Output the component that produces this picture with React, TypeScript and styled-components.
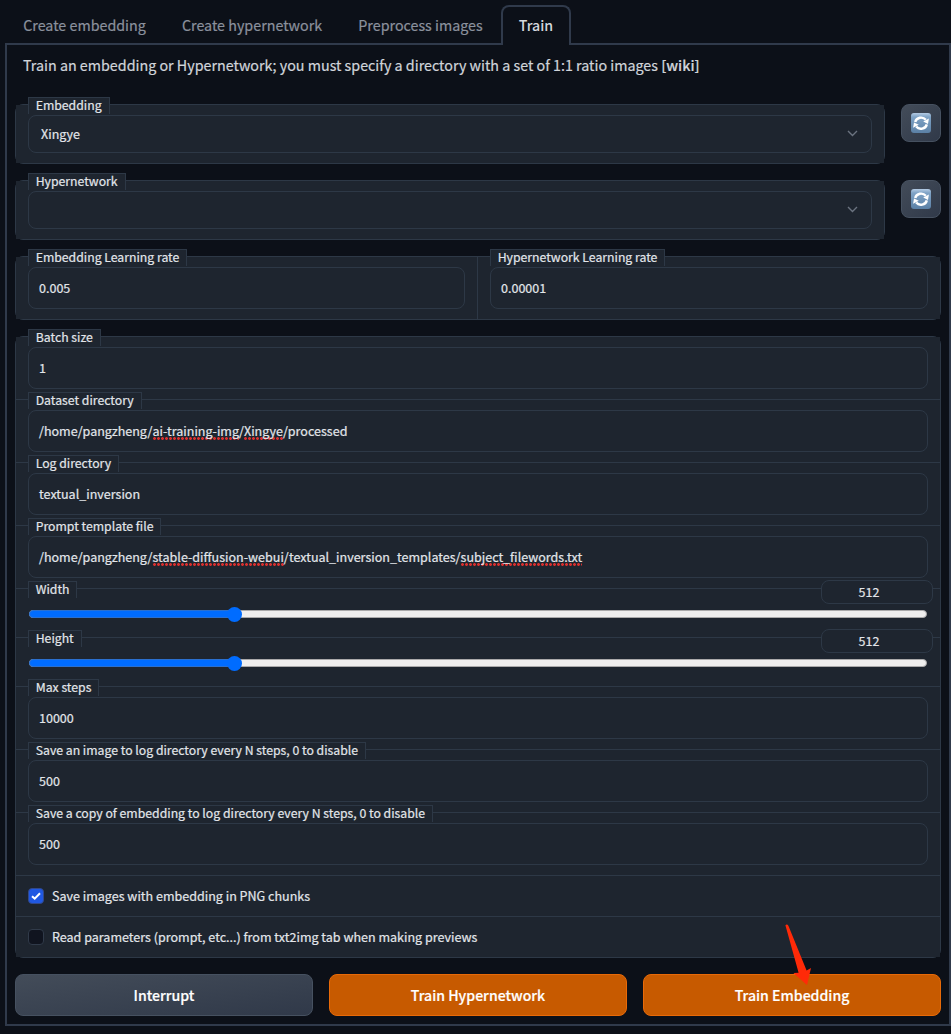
import React from 'react';
import styled, { createGlobalStyle, css } from 'styled-components';

const line = '#2d3846';
const fill = '#1e252f';
const page = '#0c1018';

const Global = createGlobalStyle`
  * { box-sizing: border-box; }
  body {
    margin: 0;
    background: ${page};
    color: #e2e5ea;
    font-family: "Noto Sans CJK SC", "Liberation Sans", sans-serif;
    font-size: 12.54px;
    line-height: 20px;
    -webkit-text-stroke: 0.2px currentColor;
  }
`;

const Page = styled.main`
  width: 951px;
  height: 1034px;
  padding: 5px 0 0 5px;
  overflow: hidden;
`;

const TabBar = styled.nav`
  display: flex;
  height: 40px;
  border-bottom: 2px solid #303a4b;
`;

const Tab = styled.button<{ $active?: boolean; $width: number }>`
  width: ${p => p.$width}px;
  height: 40px;
  padding: 0 0 3px;
  border: 2px solid transparent;
  border-bottom: 0;
  border-radius: 8px 8px 0 0;
  background: transparent;
  color: #8b919d;
  font: inherit;
  font-size: 14.3px;
  white-space: nowrap;
  ${p => p.$active && css`
    border-color: #303a4b;
    background: ${page};
    color: #d5d8de;
    font-size: 14.2px;
    font-weight: 500;
    -webkit-text-stroke: 0;
  `}
`;

const Panel = styled.section`
  display: flex;
  flex-direction: column;
  gap: 16px;
  height: 981px;
  padding: 8px 8px 8px;
  border: 2px solid #303a4b;
  border-top: 0;
`;

const Intro = styled.p`
  margin: 0;
  padding-left: 8px;
  height: 35px;
  line-height: 24px;
  font-size: 14.3px;
  color: #d1d5db;
`;

const Wiki = styled.a`
  font-weight: 500;
`;

const Row = styled.div`
  display: flex;
  gap: 16px;
`;

const Block = styled.div`
  flex: 1;
  border: 1px solid ${line};
  border-radius: 8px;
`;

const Split = styled(Block)`
  display: grid;
  grid-template-columns: 461px 1fr;
`;

const Cell = styled.div<{ $height?: number }>`
  position: relative;
  padding: 10px 12px;
  height: ${p => (p.$height ? `${p.$height}px` : 'auto')};
  background: ${fill};
  ${Split} > & + & { border-left: 1px solid ${line}; }
`;

const Stack = styled(Block)`
  flex: none;
  > * + * { border-top: 1px solid ${line}; }
`;

const Label = styled.span`
  position: absolute;
  top: -8px;
  left: 12px;
  height: 17px;
  padding: 0 7px 0 6.7px;
  border: 1px solid ${line};
  border-bottom: 0;
  background: ${fill};
  font-size: 12.26px;
  line-height: 14px;
  white-space: nowrap;
`;

const Box = styled.div<{ $select?: boolean }>`
  display: flex;
  align-items: center;
  justify-content: space-between;
  height: ${p => (p.$select ? 38 : 42)}px;
  padding: ${p => (p.$select ? '0 12px' : '0 10px')};
  border: 1px solid ${line};
  border-radius: 8px;
`;

const Misspelt = styled.span`
  display: inline-block;
  height: 19px;
  vertical-align: top;
  background: radial-gradient(circle at 1.5px 1.5px, #d9302f 1.2px, transparent 1.6px) 0 100% / 4px 3px repeat-x;
`;

const Refresh = styled.button`
  display: grid;
  place-items: center;
  width: 40px;
  height: 38px;
  padding: 0;
  border: 1px solid #465160;
  border-radius: 8px;
  background: linear-gradient(to bottom right, #434c59, #303949);
`;

const NumberBox = styled.div`
  position: absolute;
  top: -9px;
  right: 7px;
  width: 112px;
  height: 24px;
  padding-right: 16px;
  border: 1px solid ${line};
  border-radius: 8px;
  background: ${fill};
  text-align: center;
  line-height: 22px;
`;

const Track = styled.div`
  position: relative;
  height: 8px;
  margin: 11px 1px 0;
  border: 1px solid #aaa9aa;
  border-radius: 4px;
  background: #efeeee;
`;

const Filled = styled.div`
  position: absolute;
  top: -1px;
  left: -1px;
  height: 8px;
  border: 1px solid #2b70cf;
  border-radius: 4px;
  background: #006cff;
`;

const Thumb = styled.div`
  position: absolute;
  top: -4.5px;
  width: 15px;
  height: 15px;
  margin-left: -8.5px;
  border-radius: 50%;
  background: #006cff;
`;

const CheckRow = styled.label<{ $height: number }>`
  display: flex;
  align-items: center;
  gap: 8px;
  height: ${p => p.$height}px;
  padding: 0 12px;
  background: ${fill};
`;

const Check = styled.span<{ $on?: boolean }>`
  display: grid;
  place-items: center;
  width: 16px;
  height: 16px;
  border: 1px solid ${p => (p.$on ? '#31488a' : '#303a49')};
  border-radius: 4px;
  background: ${p => (p.$on ? '#2058e2' : '#10141f')};
`;

const Action = styled.button<{ $primary?: boolean }>`
  position: relative;
  flex: 1;
  height: 42px;
  padding: 0;
  border: 1px solid ${p => (p.$primary ? '#e86a08' : '#465160')};
  border-radius: 8px;
  background: ${p => (p.$primary ? '#c75a00' : 'linear-gradient(to bottom right, #434c59, #303949)')};
  color: #fff;
  font: inherit;
  font-size: 14.1px;
  font-weight: 500;
`;

const Arrow = styled.svg`
  position: absolute;
  left: 138px;
  top: -52px;
`;

const RefreshIcon = () => (
  <svg width="20" height="20" viewBox="0 0 20 20">
    <defs>
      <linearGradient id="tile" x1="0" y1="0" x2="0" y2="1">
        <stop offset="0" stopColor="#b4cbe4" />
        <stop offset="0.2" stopColor="#7fa3c6" />
        <stop offset="1" stopColor="#5b80a5" />
      </linearGradient>
    </defs>
    <rect width="20" height="20" rx="3" fill="url(#tile)" />
    <path d="M4.2 9A6 5.6 0 0 1 14.8 6.8M15.8 11.4A6 5.6 0 0 1 5.2 13.6" fill="none" stroke="#fff" strokeWidth="2.4" />
    <path d="M17.9 5.6 17 11 12.2 8.6zM2.1 14.8 3 9.4 7.8 11.8z" fill="#fff" />
  </svg>
);

const Chevron = () => (
  <svg width="12" height="8" viewBox="0 0 12 8" fill="none" stroke="#6b7380" strokeWidth="1.4">
    <path d="M1 1 5.5 5.5 10 1" />
  </svg>
);

const Field = ({ label, children }: { label: string; children: React.ReactNode }) => (
  <Cell>
    <Label>{label}</Label>
    <Box><span>{children}</span></Box>
  </Cell>
);

const Select = ({ label, value }: { label: string; value?: string }) => (
  <Row>
    <Block>
      <Cell>
        <Label>{label}</Label>
        <Box $select><span>{value}</span><Chevron /></Box>
      </Cell>
    </Block>
    <Refresh><RefreshIcon /></Refresh>
  </Row>
);

const Slider = ({ label, value, max }: { label: string; value: number; max: number }) => {
  const at = `${((value - 64) / (max - 64)) * 100 + 0.4}%`;
  return (
    <Cell $height={49}>
      <Label>{label}</Label>
      <NumberBox>{value}</NumberBox>
      <Track>
        <Filled style={{ width: at }} />
        <Thumb style={{ left: at }} />
      </Track>
    </Cell>
  );
};

export default function App() {
  return (
    <Page>
      <Global />
      <TabBar>
        <Tab $width={159}>Create embedding</Tab>
        <Tab $width={176}>Create hypernetwork</Tab>
        <Tab $width={161}>Preprocess images</Tab>
        <Tab $width={70} $active>Train</Tab>
      </TabBar>
      <Panel>
        <Intro>
          Train an embedding or Hypernetwork; you must specify a directory with a set of 1:1 ratio images <Wiki>[wiki]</Wiki>
        </Intro>
        <Select label="Embedding" value="Xingye" />
        <Select label="Hypernetwork" />
        <Row>
          <Split>
            <Field label="Embedding Learning rate">0.005</Field>
            <Field label="Hypernetwork Learning rate">0.00001</Field>
          </Split>
        </Row>
        <Stack>
          <Field label="Batch size">1</Field>
          <Field label="Dataset directory">
            /home/pangzheng/<Misspelt>ai-training-img</Misspelt>/<Misspelt>Xingye</Misspelt>/processed
          </Field>
          <Field label="Log directory">textual_inversion</Field>
          <Field label="Prompt template file">
            /home/pangzheng/<Misspelt>stable-diffusion-webui</Misspelt>/textual_inversion_templates/<Misspelt>subject_filewords.txt</Misspelt>
          </Field>
          <Slider label="Width" value={512} max={2048} />
          <Slider label="Height" value={512} max={2048} />
          <Field label="Max steps">10000</Field>
          <Field label="Save an image to log directory every N steps, 0 to disable">500</Field>
          <Field label="Save a copy of embedding to log directory every N steps, 0 to disable">500</Field>
          <CheckRow $height={41}>
            <Check $on>
              <svg width="10" height="8" viewBox="0 0 10 8" fill="none" stroke="#fff" strokeWidth="2">
                <path d="M1 4.2 3.7 6.6 9 1.2" />
              </svg>
            </Check>
            Save images with embedding in PNG chunks
          </CheckRow>
          <CheckRow $height={41}>
            <Check />
            Read parameters (prompt, etc...) from txt2img tab when making previews
          </CheckRow>
        </Stack>
        <Row>
          <Action>Interrupt</Action>
          <Action $primary>Train Hypernetwork</Action>
          <Action $primary>
            Train Embedding
            <Arrow width="30" height="66" viewBox="0 0 30 66" fill="#ff2a08">
              <path d="M3.4 2.2Q5 .6 6.4 2.8L24.6 47.4 29 45 25 62 11.4 50 16.6 49.8Z" />
            </Arrow>
          </Action>
        </Row>
      </Panel>
    </Page>
  );
}
